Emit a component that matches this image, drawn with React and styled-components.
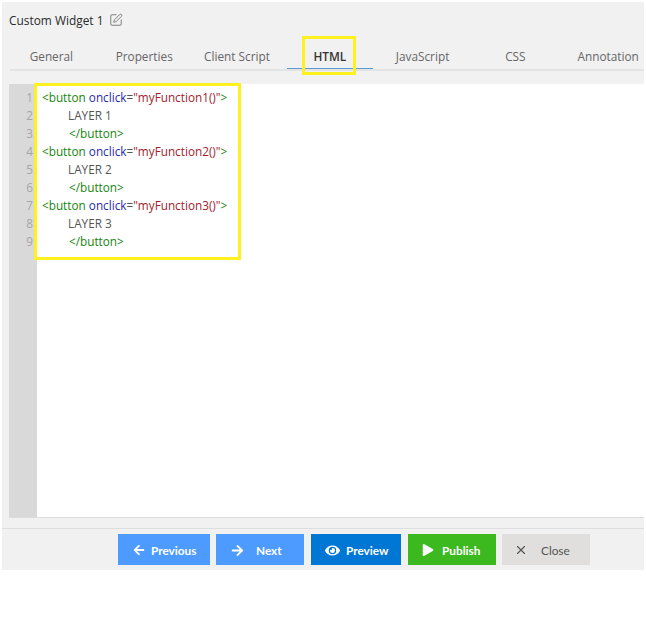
import styled, { createGlobalStyle } from "styled-components";
import { SquarePen, X } from "lucide-react";
import { FaArrowLeft, FaArrowRight, FaEye, FaPlay } from "react-icons/fa";

const GlobalStyle = createGlobalStyle`
  html, body {
    margin: 0;
    background: #fff;
    font-family: "Open Sans", "Noto Sans", sans-serif;
  }
`;

const Panel = styled.div`
  width: 642px;
  height: 568px;
  margin: 2px 0 0 2px;
  background: #f1f1f2;
  display: flex;
  flex-direction: column;
  overflow: hidden;
`;

const TitleRow = styled.div`
  height: 37px;
  padding: 0 0 1px 7px;
  display: flex;
  align-items: center;
  gap: 6px;
  font-size: 11.9px;
  color: #2b2b2b;
  box-sizing: border-box;
`;

const TitleIcon = styled(SquarePen)`
  color: #666;
`;

const TabBar = styled.div`
  height: 31px;
  margin-left: 8px;
  margin-top: -1px;
  display: flex;
  border-bottom: 2px solid #e2e3e3;
`;

const Tab = styled.div`
  position: relative;
  flex: 0 0 92.8px;
  margin-left: ${(props) => (props.first ? "-5px" : "0")};
  text-align: center;
  font-size: 11.8px;
  line-height: 36px;
  color: ${(props) => (props.active ? "#333" : "#666")};
  font-weight: ${(props) => (props.active ? 600 : 400)};
  &::after {
    content: "";
    display: ${(props) => (props.active ? "block" : "none")};
    position: absolute;
    left: 4px;
    right: 3px;
    bottom: 0;
    height: 1px;
    background: #5b9bd5;
  }
`;

const TabHighlight = styled.div`
  position: absolute;
  left: 19px;
  top: -2px;
  width: 54px;
  height: 39px;
  box-sizing: border-box;
  border: 3px solid #fff01f;
  z-index: 1;
`;

const Editor = styled.div`
  position: relative;
  height: 433px;
  margin: 13px 0 0 7px;
  background: #fff;
  display: flex;
  border-bottom: 1px solid #dcdcdc;
`;

const Gutter = styled.div`
  width: 28px;
  background: #d9d9d9;
  padding-top: 4px;
  box-sizing: border-box;
`;

const LineNumber = styled.div`
  height: 18px;
  line-height: 18px;
  font-size: 11.8px;
  color: #a6a6a6;
  text-align: right;
  padding-right: 4px;
`;

const Code = styled.div`
  padding: 4px 0 0 5px;
`;

const CodeLine = styled.div`
  height: 18px;
  line-height: 18px;
  font-size: 11.75px;
  white-space: pre;
  padding-left: ${(props) => props.indent || 0}px;
  color: #555;
`;

const Tag = styled.span`
  color: #17850f;
`;

const Attr = styled.span`
  color: #2a2ab0;
`;

const Str = styled.span`
  color: #a31b2d;
`;

const CodeHighlight = styled.div`
  position: absolute;
  left: 25px;
  top: -1px;
  width: 207px;
  height: 177px;
  box-sizing: border-box;
  border: 3px solid #fff01f;
`;

const Footer = styled.div`
  margin-top: 10px;
  border-top: 1px solid #dedede;
  flex: 1;
  display: flex;
  gap: 6px;
  padding: 5px 0 0 116px;
`;

const Button = styled.div`
  width: ${(props) => props.width}px;
  height: 31px;
  box-sizing: border-box;
  padding: 1px 0 0 ${(props) => props.pad}px;
  margin-right: ${(props) => props.gapAfter || 0}px;
  background: ${(props) => props.bg};
  color: ${(props) => props.fg || "#fff"};
  font-family: "Lato", sans-serif;
  font-size: 11.8px;
  font-weight: ${(props) => (props.fg ? 400 : 700)};
  display: flex;
  align-items: center;
  gap: ${(props) => props.gap}px;
`;

const tabs = ["General", "Properties", "Client Script", "HTML", "JavaScript", "CSS", "Annotation"];

const functionLine = (n) => (
  <CodeLine>
    <Tag>&lt;button</Tag> <Attr>onclick</Attr>=<Str>"myFunction{n}()"</Str>
    <Tag>&gt;</Tag>
  </CodeLine>
);

const layerBlock = (n) => (
  <div key={n}>
    {functionLine(n)}
    <CodeLine indent={26}>LAYER {n}</CodeLine>
    <CodeLine indent={27}>
      <Tag>&lt;/button&gt;</Tag>
    </CodeLine>
  </div>
);

export default function App() {
  return (
    <>
      <GlobalStyle />
      <Panel>
        <TitleRow>
          Custom Widget 1
          <TitleIcon size={14} strokeWidth={1.4} />
        </TitleRow>
        <TabBar>
          {tabs.map((t, i) => (
            <Tab key={t} first={i === 0} active={t === "HTML"}>
              {t}
              {t === "HTML" && <TabHighlight />}
            </Tab>
          ))}
        </TabBar>
        <Editor>
          <Gutter>
            {[1, 2, 3, 4, 5, 6, 7, 8, 9].map((n) => (
              <LineNumber key={n}>{n}</LineNumber>
            ))}
          </Gutter>
          <Code>{[1, 2, 3].map(layerBlock)}</Code>
          <CodeHighlight />
        </Editor>
        <Footer>
          <Button width={92} bg="#4d9bff" pad={15} gap={6}>
            <FaArrowLeft size={12} />
            Previous
          </Button>
          <Button width={88} bg="#4d9bff" pad={15} gap={12} gapAfter={1}>
            <FaArrowRight size={13} />
            Next
          </Button>
          <Button width={90} bg="#0077d4" pad={14} gap={6} gapAfter={1}>
            <FaEye size={15} />
            Preview
          </Button>
          <Button width={88} bg="#3cb91f" pad={14} gap={8}>
            <FaPlay size={12} />
            Publish
          </Button>
          <Button width={88} bg="#e0dfdd" fg="#555" pad={12} gap={13}>
            <X size={14} strokeWidth={2} />
            Close
          </Button>
        </Footer>
      </Panel>
    </>
  );
}
